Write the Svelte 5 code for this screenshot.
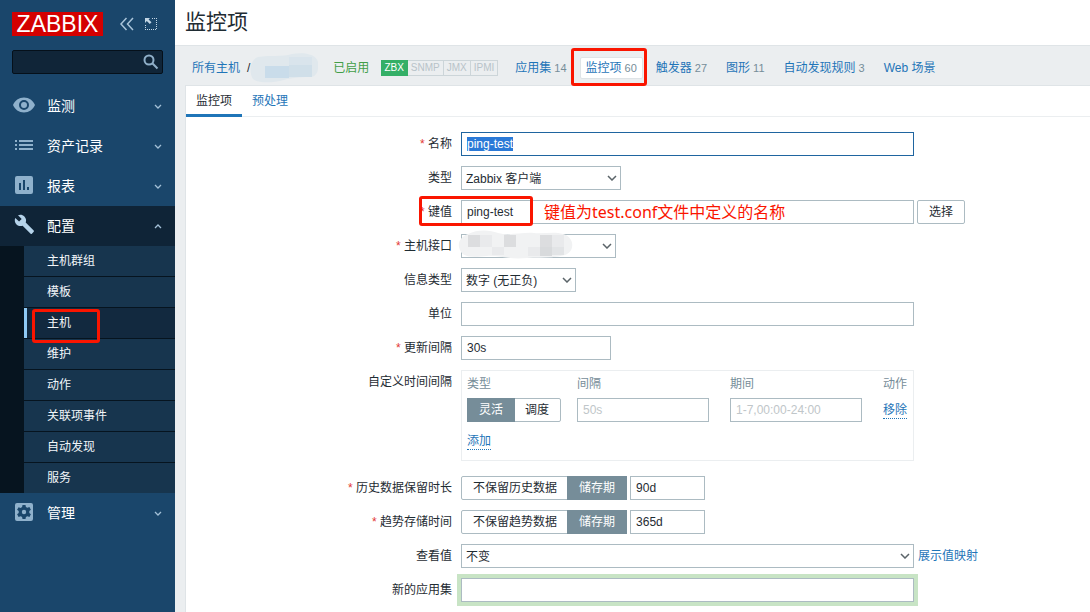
<script>
  import { onMount } from 'svelte';

  const menuTop = [
    { id: 'monitoring', label: '监测' },
    { id: 'inventory', label: '资产记录' },
    { id: 'reports', label: '报表' },
    { id: 'config', label: '配置' }
  ];
  const submenu = ['主机群组', '模板', '主机', '维护', '动作', '关联项事件', '自动发现', '服务'];
  const interfaces = ['ZBX', 'SNMP', 'JMX', 'IPMI'];
  const hostLinks = [
    { label: '应用集', count: 14 },
    { label: '监控项', count: 60 },
    { label: '触发器', count: 27 },
    { label: '图形', count: 11 },
    { label: '自动发现规则', count: 3 },
    { label: 'Web 场景', count: null }
  ];

  let search = $state('');
  let name = $state('ping-test');
  let key = $state('ping-test');
  let units = $state('');
  let delay = $state('30s');
  let intervalType = $state('flexible');
  let history = $state('90d');
  let historyMode = $state('store');
  let trends = $state('365d');
  let trendsMode = $state('store');
  let newApp = $state('');
  let nameInput;

  onMount(() => {
    nameInput.focus();
    nameInput.select();
  });
</script>

{#snippet icon(id)}
  <svg class="icon" viewBox="0 0 24 24" width="24" height="24" aria-hidden="true">
    {#if id === 'monitoring'}
      <path fill-rule="evenodd" d="M12 4.500C7 4.500 2.800 7.500 1 12c1.800 4.500 6 7.500 11 7.500s9.200-3 11-7.500c-1.800-4.500-6-7.500-11-7.500zM12 17a5 5 0 1 1 0-10 5 5 0 0 1 0 10zm0-8a3 3 0 1 0 0 6 3 3 0 0 0 0-6z" />
    {:else if id === 'inventory'}
      <path d="M3 7h2v2H3zM7 7h14v2H7zM3 11h2v2H3zM7 11h14v2H7zM3 15h2v2H3zM7 15h14v2H7z" />
    {:else if id === 'reports'}
      <path fill-rule="evenodd" d="M5 3h14a2 2 0 0 1 2 2v14a2 2 0 0 1-2 2H5a2 2 0 0 1-2-2V5a2 2 0 0 1 2-2zM7 10v7h2v-7zM11 7v10h2V7zM15 14v3h2v-3z" />
    {:else if id === 'config'}
      <path d="M20.700 18.500l-8-8c.8-2 .4-4.400-1.300-6.100C9.600 2.600 7 2.300 5 3.300l3.700 3.700-2.600 2.600L2.300 6c-1 2-.6 4.600 1.200 6.400 1.700 1.700 4.100 2.100 6.100 1.300l8 8c.4.300 1 .3 1.300 0l1.800-1.900c.4-.3.400-.9 0-1.300z" transform="translate(1 -1)" />
    {:else}
      <path fill-rule="evenodd" d="M5 3h14a2 2 0 0 1 2 2v14a2 2 0 0 1-2 2H5a2 2 0 0 1-2-2V5a2 2 0 0 1 2-2zM10.500 5l-.4 2-1.500.9-2-.7-1.500 2.600L6.700 11v2l-1.600 1.300 1.500 2.600 2-.7 1.500.9.400 2h3l.4-2 1.500-.9 2 .7 1.500-2.600-1.600-1.300v-2l1.600-1.300-1.500-2.600-2 .7-1.500-.9-.4-2zM12 9.800a2.200 2.200 0 1 1 0 4.400 2.200 2.200 0 0 1 0-4.400z" />
    {/if}
  </svg>
{/snippet}

{#snippet arrow()}
  <svg class="arrow" viewBox="0 0 10 6" width="10" height="6" aria-hidden="true">
    <path d="M1 1l4 4 4-4" />
  </svg>
{/snippet}

<div class="wrapper">
  <aside class="sidebar">
    <div class="sidebar-header">
      <a class="logo" href="#home">ZABBIX</a>
      <button class="tool" aria-label="收起">
        <svg viewBox="0 0 16 14" width="16" height="14"><path d="M7.500 1L2 7l5.500 6M14 1L8.500 7l5.500 6" fill="none" stroke="#a9c4da" stroke-width="1.500" /></svg>
      </button>
      <button class="tool" aria-label="隐藏">
        <svg viewBox="0 0 12 12" width="12" height="12">
          <path d="M7 .5h5M11.500 2v10M0 11.500h12M.5 7v5" fill="none" stroke="#c3d6e5" stroke-dasharray="1 1" />
          <path d="M0 0h5L3.600 1.400 6.500 4.300 4.800 6 1.800 3.100 0 5z" fill="#c3d6e5" />
        </svg>
      </button>
    </div>

    <form class="search" role="search">
      <input type="text" aria-label="搜索" bind:value={search} />
      <button type="button" aria-label="搜索">
        <svg viewBox="0 0 16 16" width="16" height="16"><circle cx="6" cy="6" r="4.500" /><path d="M9.300 9.300L14.500 14.500" /></svg>
      </button>
    </form>

    <nav>
      {#each menuTop as item (item.id)}
        <a class="menu-item" class:open={item.id === 'config'} href="#{item.id}">
          {@render icon(item.id)}
          <span>{item.label}</span>
          <svg class="chevron" viewBox="0 0 8 5" width="8" height="5" aria-hidden="true">
            <path d={item.id === 'config' ? 'M1 4l3-3 3 3' : 'M1 1l3 3 3-3'} />
          </svg>
        </a>
      {/each}
      <ul class="submenu">
        {#each submenu as item}
          <li class:selected={item === '主机'}>
            <a href="#{item}">{item}</a>
            {#if item === '主机'}<i class="mark mark-menu"></i>{/if}
          </li>
        {/each}
      </ul>
      <a class="menu-item" href="#admin">
        {@render icon('admin')}
        <span>管理</span>
        <svg class="chevron" viewBox="0 0 8 5" width="8" height="5" aria-hidden="true"><path d="M1 1l3 3 3-3" /></svg>
      </a>
    </nav>
  </aside>

  <main>
    <header><h1>监控项</h1></header>

    <div class="host-nav">
      <a href="#hosts">所有主机</a>
      <span class="slash">/</span>
      <svg class="host-name" viewBox="0 0 68 30" width="68" height="30" aria-hidden="true">
        <path d="M8 4C20 2 32 4 42 1c12-2 24 0 26 8 1 8-1 15-8 15-12 0-20 1-30 4-10 2-22 2-27-2C-2 18 1 6 8 4z" fill="#e0e8ed" />
        <path d="M15 13h24v12H15z" fill="#c9dcea" />
        <path d="M39 4h23v8H39z" fill="#d9e4ec" />
        <path d="M39 12h23v12H39z" fill="#d0dfe9" />
      </svg>
      <span class="enabled">已启用</span>
      <span class="badges">
        {#each interfaces as iface}
          <span class:on={iface === 'ZBX'}>{iface}</span>
        {/each}
      </span>
      <nav class="links">
        {#each hostLinks as link}
          <span class="link" class:current={link.label === '监控项'}>
            <a href="#{link.label}">{link.label}</a>
            {#if link.count}<sup>{link.count}</sup>{/if}
            {#if link.label === '监控项'}<i class="mark mark-nav"></i>{/if}
          </span>
        {/each}
      </nav>
    </div>

    <section class="content">
      <div class="tabs">
        <a class="active" href="#item">监控项</a>
        <a href="#preprocessing">预处理</a>
      </div>

      <form class="item-form">
        <div class="row">
          <label class="required" for="name">名称</label>
          <div class="field"><input class="wide" id="name" type="text" bind:value={name} bind:this={nameInput} /></div>
        </div>
        <div class="row">
          <label for="type">类型</label>
          <div class="field">
            <span class="select w160"><select id="type"><option>Zabbix 客户端</option></select>{@render arrow()}</span>
          </div>
        </div>
        <div class="row">
          <label class="required" for="key">键值</label>
          <div class="field">
            <input class="wide" id="key" type="text" bind:value={key} />
            <button class="btn" type="button">选择</button>
            <i class="mark mark-key"></i>
            <span class="note">键值为test.conf文件中定义的名称</span>
          </div>
        </div>
        <div class="row">
          <label class="required" for="interface">主机接口</label>
          <div class="field">
            <span class="select w155"><select id="interface"><option></option></select>{@render arrow()}</span>
            <svg class="smudge" viewBox="0 0 116 30" width="116" height="30" aria-hidden="true">
              <path d="M10 5C20 0 32 1 40 4c12 3 24-1 36 0 10 1 20-2 29 1 12 3 12 18 2 21-14 4-26 2-38 3-18 2-30-3-40-2-12 1-22 2-26-4C-2 15 2 8 10 5z" fill="#f1f2f3" />
              <path d="M10 6h12v12H10zM46 6h12v12H46zM82 6h12v12H82z" fill="#dcdddf" />
              <path d="M22 6h12v12H22zM34 18h12v8H34zM94 6h12v12H94zM70 18h12v9H70z" fill="#e9eaec" />
              <path d="M82 18h12v9H82z" fill="#d8dadc" />
              <path d="M94 18h12v8H94z" fill="#e2e4e6" />
            </svg>
          </div>
        </div>
        <div class="row">
          <label for="value-type">信息类型</label>
          <div class="field">
            <span class="select w115"><select id="value-type"><option>数字 (无正负)</option></select>{@render arrow()}</span>
          </div>
        </div>
        <div class="row">
          <label for="units">单位</label>
          <div class="field"><input class="wide" id="units" type="text" bind:value={units} /></div>
        </div>
        <div class="row">
          <label class="required" for="delay">更新间隔</label>
          <div class="field"><input class="w150" id="delay" type="text" bind:value={delay} /></div>
        </div>
        <div class="row">
          <span class="label">自定义时间间隔</span>
          <div class="field">
            <div class="intervals wide">
              <table>
                <thead>
                  <tr><th>类型</th><th>间隔</th><th>期间</th><th>动作</th></tr>
                </thead>
                <tbody>
                  <tr>
                    <td>
                      <span class="segmented">
                        <label><input type="radio" value="flexible" bind:group={intervalType} />灵活</label>
                        <label><input type="radio" value="scheduling" bind:group={intervalType} />调度</label>
                      </span>
                    </td>
                    <td><input class="w132" type="text" aria-label="间隔" placeholder="50s" /></td>
                    <td><input class="w132" type="text" aria-label="期间" placeholder="1-7,00:00-24:00" /></td>
                    <td><button class="link-btn" type="button">移除</button></td>
                  </tr>
                </tbody>
              </table>
              <button class="link-btn" type="button">添加</button>
            </div>
          </div>
        </div>
        <div class="row">
          <label class="required" for="history">历史数据保留时长</label>
          <div class="field">
            <span class="segmented">
              <label><input type="radio" value="none" bind:group={historyMode} />不保留历史数据</label>
              <label><input type="radio" value="store" bind:group={historyMode} />储存期</label>
            </span>
            <input class="w75" id="history" type="text" bind:value={history} />
          </div>
        </div>
        <div class="row">
          <label class="required" for="trends">趋势存储时间</label>
          <div class="field">
            <span class="segmented">
              <label><input type="radio" value="none" bind:group={trendsMode} />不保留趋势数据</label>
              <label><input type="radio" value="store" bind:group={trendsMode} />储存期</label>
            </span>
            <input class="w75" id="trends" type="text" bind:value={trends} />
          </div>
        </div>
        <div class="row">
          <label for="valuemap">查看值</label>
          <div class="field">
            <span class="select wide"><select id="valuemap"><option>不变</option></select>{@render arrow()}</span>
            <a class="after" href="#valuemap">展示值映射</a>
          </div>
        </div>
        <div class="row">
          <label for="new-app">新的应用集</label>
          <div class="field"><input class="wide new-app" id="new-app" type="text" bind:value={newApp} /></div>
        </div>
      </form>
    </section>
  </main>
</div>

<style>
  :global(*) { box-sizing: border-box; }
  :global(body) { margin: 0; }
  .wrapper { display: flex; min-height: 100vh; font: 12px/16px "Liberation Sans", "Noto Sans CJK SC", sans-serif; color: #1f2c33; background: #ebeef0; }
  a { color: #1f75b8; text-decoration: none; }
  button, input, select { font: inherit; color: inherit; margin: 0; }
  button { cursor: pointer; }

  /* sidebar */
  .sidebar { flex: none; width: 175px; background: #1a466b; }
  .sidebar-header { display: flex; align-items: center; height: 48px; padding-left: 12px; }
  .logo { flex: none; width: 91px; height: 24px; margin-right: 16px; background: #d40000; color: #fff; font-size: 23px; line-height: 24px; text-align: center; }
  .tool { display: flex; flex: none; padding: 0; margin-right: 10px; border: 0; background: none; }
  .search { display: flex; align-items: center; height: 24px; margin: 2px 12px 12px; background: #102538; border: 1px solid #05101a; border-radius: 2px; }
  .search input { flex: 1; min-width: 0; height: 22px; border: 0; background: none; color: #fff; outline: none; }
  .search button { display: flex; padding: 0 3px; border: 0; background: none; }
  .search svg { fill: none; stroke: #8fafc8; stroke-width: 2; }
  .menu-item { display: flex; align-items: center; height: 40px; padding: 0 13px 0 12px; color: #fff; font-size: 14px; }
  .menu-item span { flex: 1; margin-left: 11px; }
  .menu-item.open { background: #0f2437; }
  .icon { fill: #8fb1cc; position: relative; top: -1px; }
  .open .icon { fill: #b5d3ea; }
  .chevron { fill: none; stroke: #a3c0d7; stroke-width: 1.3; }
  .submenu { list-style: none; margin: 0; padding: 0 0 0 24px; background: #06141f; }
  .submenu li { position: relative; height: 31px; border-bottom: 1px solid #06141f; background: #17354e; }
  .submenu li:last-child { height: 30px; border-bottom: 0; }
  .submenu a { display: block; padding-left: 23px; line-height: 30px; color: #f2f6f9; }
  .submenu li.selected { background: #12293f; }
  .submenu li.selected a { height: 30px; padding-left: 20px; border-left: 3px solid #8fcaf5; }

  /* header and host navigation */
  main { flex: 1; min-width: 0; }
  header { height: 45px; padding: 0 10px; background: #fff; }
  h1 { margin: 0; font-size: 21px; font-weight: normal; line-height: 44px; }
  .host-nav { display: flex; align-items: center; height: 40px; padding: 5px 17px 0; border-top: 1px solid #dfe4e7; white-space: nowrap; }
  .slash { margin-left: 7px; }
  .host-name { flex: none; margin-right: 15px; }
  .enabled { margin-right: 12px; color: #429e47; }
  .badges { display: flex; font-size: 10px; line-height: 14px; color: #b8c3c9; }
  .badges span { padding: 0 3px; border: 1px solid #ccd5d9; border-left-width: 0; }
  .badges .on { background: #34af67; border-color: #34af67; color: #fff; }
  .links { display: flex; gap: 7px; margin-left: 11px; }
  .link { position: relative; display: flex; gap: 3px; padding: 1px 5px; border: 1px solid transparent; line-height: 18px; }
  .link.current { background: #fff; border-color: #dfe4e7; border-radius: 2px; }
  sup { font-size: 11px; line-height: 18px; vertical-align: baseline; color: #768d99; }

  .content { margin-left: 10px; background: #fff; border: 1px solid #dfe4e7; border-width: 1px 0 0 1px; }
  .tabs { display: flex; height: 31px; border-bottom: 1px solid #ebeef0; }
  .tabs a { height: 31px; padding: 0 10px; line-height: 30px; }
  .tabs .active { color: #1f2c33; border-bottom: 3px solid #1f75b8; }

  /* form */
  .item-form { padding: 10px 0 5px; }
  .row { display: grid; grid-template-columns: 275px 1fr; padding: 5px 0; }
  .row > label, .label { padding-right: 9px; line-height: 24px; text-align: right; }
  .required::before { content: "* "; color: #e33734; }
  .field { position: relative; display: flex; align-items: center; min-width: 0; white-space: nowrap; }
  input[type="text"] { height: 24px; padding: 0 5px; border: 1px solid #acbbc2; border-radius: 0; background: #fff; }
  .search input[type="text"] { border: 0; background: none; }
  .item-form input:focus { border-color: #1f65a0; outline: none; }
  input::selection { background: #2a79d7; color: #fff; }
  input::placeholder { color: #c0c6c9; }
  .wide { width: 453px; }
  .w160 { width: 160px; }
  .w155 { width: 155px; }
  .w150 { width: 150px; }
  .w132 { width: 132px; }
  .w115 { width: 115px; }
  .w75 { width: 75px; margin-left: 3px; }
  .select { position: relative; display: block; }
  select { display: block; width: 100%; height: 24px; padding: 1px 20px 0 4px; border: 1px solid #acbbc2; border-radius: 0; background: #fff; appearance: none; }
  .arrow { position: absolute; top: 9px; right: 4px; fill: none; stroke: #5b6469; stroke-width: 1.5; pointer-events: none; }
  .btn { height: 24px; margin-left: 3px; padding: 0 11px; border: 1px solid #acbbc2; border-radius: 2px; background: #fff; }
  .after { margin-left: 4px; }
  .new-app { box-shadow: 0 0 0 4px #c8e4c5; }

  .intervals { height: 91px; margin-bottom: 5px; padding: 0 5px; border: 1px solid #ebeef0; }
  table { width: 100%; border-collapse: collapse; }
  th { height: 26px; padding: 0; font-weight: normal; text-align: left; color: #768d99; }
  td { height: 26px; padding: 0; vertical-align: middle; }
  th:nth-child(1) { width: 110px; }
  th:nth-child(2), th:nth-child(3) { width: 153px; }
  .link-btn { padding: 0; border: 0; border-bottom: 1px dotted #1f75b8; background: none; color: #1f75b8; }
  .intervals > .link-btn { margin-top: 10px; }

  .segmented { display: inline-flex; vertical-align: middle; border: 1px solid #acbbc2; border-radius: 2px; }
  .segmented label { position: relative; padding: 0 11px; line-height: 22px; }
  .segmented label:has(input:checked) { background: #768d99; color: #fff; box-shadow: 0 0 0 1px #768d99; }
  .segmented input { position: absolute; inset: 0; margin: 0; opacity: 0; }

  /* marker boxes laid over the page */
  .mark { position: absolute; border: 3px solid #fa1500; border-radius: 3px; pointer-events: none; }
  .mark-menu { left: 8px; top: 1px; width: 68px; height: 34px; z-index: 1; }
  .mark-nav { inset: -10px -5px -8px -10px; }
  .mark-key { left: -42px; top: -4px; width: 114px; height: 30px; }
  .note { position: absolute; left: 83px; top: 0; font: 16px/24px "Noto Sans", "Noto Sans CJK SC", sans-serif; color: #fa1500; pointer-events: none; }
  .smudge { position: absolute; left: -3px; top: -5px; pointer-events: none; }
</style>
